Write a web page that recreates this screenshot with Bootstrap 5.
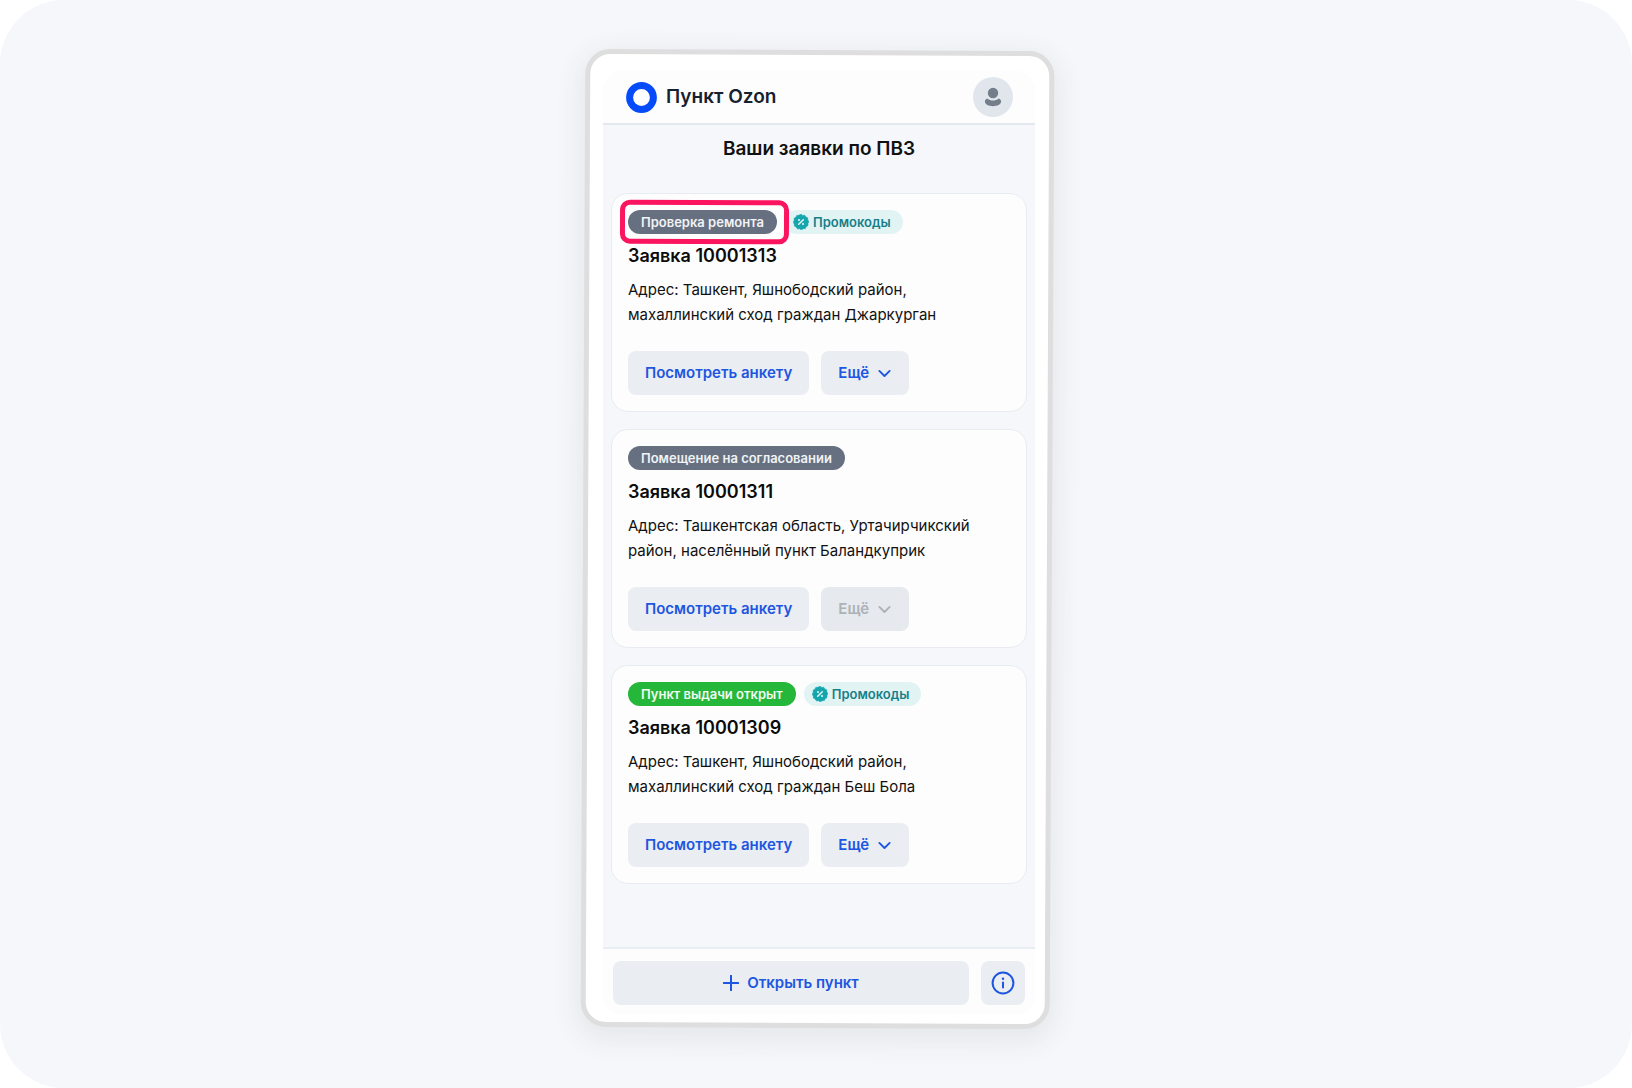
<!DOCTYPE html>
<html lang="ru">
<head>
<meta charset="utf-8">
<meta name="viewport" content="width=device-width, initial-scale=1">
<title>Пункт Ozon</title>
<link href="https://cdn.jsdelivr.net/npm/bootstrap@5.3.0/dist/css/bootstrap.min.css" rel="stylesheet">
<style>
  body { font-family: Inter, "Noto Sans", sans-serif; background: #fff; color: #111; }
  .stage { background: #f5f7fb; border-radius: 64px; padding: 71px 0 73px 6px; }
  .phone { position: relative; z-index: 0; width: 100%; max-width: 432px; }
  /* device body, slightly tilted behind the screen */
  .phone::before {
    content: ""; position: absolute; z-index: -1; inset: -21px -17px -13px -20px;
    background: #fff; border: 5px solid #dededf; border-radius: 25px;
    box-shadow: 0 8px 26px 6px rgba(60, 60, 60, .08); transform: rotate(.28deg);
  }
  .screen { background: #f5f7fb; border-radius: 20px; overflow: hidden; }
  .topbar { background: #fdfdfd; border-bottom: 2px solid #e3e8ee; padding: 6px 22px 6px 23px; }
  .brand { color: #15212e; font-size: 19px; line-height: 28px; font-weight: 600; gap: 9px; }
  .avatar { width: 40px; height: 40px; background: #e1e6ed; }
  .page-title { font-size: 19px; line-height: 28px; font-weight: 600; margin: 10px 0 30px; }
  .requests { gap: 17px; padding: 0 8px; }
  .request { background: #fdfdfd; border: 1px solid #e8ebf1; border-radius: 17px; padding: 16px; }
  .pill { font-size: 13px; line-height: 24px; font-weight: 600; border-radius: 12px; padding: 0 13px; }
  .pill-state { background: #667080; color: #f1f3f6; }
  .pill-open { background: #25b73a; color: #f1fbf2; }
  .pill-promo { background: #e2f3f3; color: #16808a; gap: 4px; padding: 0 12px 0 8px; }
  .marked { position: relative; }
  .marked::after {
    content: ""; position: absolute; inset: -10px -12px -10px -8px; z-index: 1;
    border: 5px solid #fb1460; border-radius: 10px; transform: rotate(.28deg);
  }
  .request-name { font-size: 18px; line-height: 26px; font-weight: 600; margin: 9px 0 8px; color: #0b0b0b; }
  .address { font-size: 15px; line-height: 25px; margin: 0 0 24px; }
  .action { --bs-btn-bg: #eaedf2; --bs-btn-color: #1d56e0; --bs-btn-border-width: 0px;
    --bs-btn-hover-bg: #dfe4ec; --bs-btn-hover-color: #1d56e0;
    --bs-btn-disabled-bg: #e6eaee; --bs-btn-disabled-color: #adb2b8; --bs-btn-disabled-opacity: 1;
    --bs-btn-padding-x: 17px; --bs-btn-padding-y: 0px; --bs-btn-border-radius: 8px;
    --bs-btn-font-size: 15px; --bs-btn-font-weight: 600; --bs-btn-line-height: 24px; height: 44px; }
  .bottombar { background: #fdfdfd; border-top: 2px solid #e9eef3; padding: 12px 10px 10px; gap: 12px; }
  .info { width: 44px; --bs-btn-padding-x: 0px; }
</style>
</head>
<body>
<svg class="d-none" aria-hidden="true">
  <symbol id="chevron" viewBox="0 0 16 16"><path d="M2.500 5.200 8 10.700l5.500-5.500" fill="none" stroke="currentColor" stroke-width="2" stroke-linecap="round" stroke-linejoin="round"/></symbol>
  <symbol id="promo" viewBox="0 0 16 16">
    <path d="M8 .3l1.700 1.100 2-.2 1.100 1.700 1.900.9.100 2 1.100 1.900-1 1.900.1 2-1.800 1.100-.9 1.900-2.100.1L8.300 15.700l-1.900-1-2.100.1-1.100-1.800-1.800-.9-.1-2L.2 8.300l1-1.900-.1-2.100 1.800-1.100.9-1.800 2.100-.1z" fill="#14a5ad" stroke="#14a5ad" stroke-width=".6" stroke-linejoin="round"/>
    <path d="M5.700 10.300l4.600-4.600" stroke="#e8fafa" stroke-width="1.500" stroke-linecap="round"/><circle cx="6" cy="6" r="1" fill="#e8fafa"/><circle cx="10" cy="10" r="1" fill="#e8fafa"/>
  </symbol>
</svg>
<main class="stage min-vh-100 d-flex justify-content-center">
  <div class="phone d-flex">
    <div class="screen d-flex flex-column w-100">
      <header class="topbar d-flex align-items-center justify-content-between">
        <a href="#" class="brand d-flex align-items-center text-decoration-none">
          <svg width="31" height="31" viewBox="0 0 31 31" aria-hidden="true"><circle cx="15.500" cy="15.500" r="11.900" fill="#fff" stroke="#064bfa" stroke-width="7"/></svg>
          <span>Пункт Ozon</span>
        </a>
        <button type="button" class="avatar btn border-0 rounded-circle p-0 d-flex align-items-center justify-content-center" aria-label="Профиль">
          <svg width="18" height="20" viewBox="0 0 18 20" fill="#747d8a" aria-hidden="true"><circle cx="9" cy="6" r="5.200"/><path d="M3.300 11.600C5 13 7 13.600 9 13.600s4-.6 5.700-2c1.500.5 2.400 1.500 2.400 3 0 2.900-4 4.600-8.100 4.600S.9 17.500.9 14.600c0-1.500.9-2.500 2.400-3z"/></svg>
        </button>
      </header>
      <div class="flex-grow-1">
        <h1 class="page-title text-center">Ваши заявки по ПВЗ</h1>
        <div class="requests d-flex flex-column">
          <article class="request">
            <div class="d-flex gap-2">
              <span class="pill pill-state marked">Проверка ремонта</span>
              <span class="pill pill-promo d-flex align-items-center"><svg width="16" height="16" aria-hidden="true"><use href="#promo"/></svg>Промокоды</span>
            </div>
            <h2 class="request-name">Заявка 10001313</h2>
            <p class="address">Адрес: Ташкент, Яшнободский район, махаллинский сход граждан Джаркурган</p>
            <div class="d-flex">
              <button type="button" class="btn action me-2">Посмотреть анкету</button>
              <button type="button" class="btn action d-flex align-items-center gap-2 ms-1">Ещё <svg width="15" height="15" aria-hidden="true"><use href="#chevron"/></svg></button>
            </div>
          </article>
          <article class="request">
            <div class="d-flex gap-2">
              <span class="pill pill-state">Помещение на согласовании</span>
            </div>
            <h2 class="request-name">Заявка 10001311</h2>
            <p class="address">Адрес: Ташкентская область, Уртачирчикский район, населённый пункт Баландкуприк</p>
            <div class="d-flex">
              <button type="button" class="btn action me-2">Посмотреть анкету</button>
              <button type="button" class="btn action d-flex align-items-center gap-2 ms-1" disabled>Ещё <svg width="15" height="15" aria-hidden="true"><use href="#chevron"/></svg></button>
            </div>
          </article>
          <article class="request">
            <div class="d-flex gap-2">
              <span class="pill pill-open">Пункт выдачи открыт</span>
              <span class="pill pill-promo d-flex align-items-center"><svg width="16" height="16" aria-hidden="true"><use href="#promo"/></svg>Промокоды</span>
            </div>
            <h2 class="request-name">Заявка 10001309</h2>
            <p class="address">Адрес: Ташкент, Яшнободский район, махаллинский сход граждан Беш Бола</p>
            <div class="d-flex">
              <button type="button" class="btn action me-2">Посмотреть анкету</button>
              <button type="button" class="btn action d-flex align-items-center gap-2 ms-1">Ещё <svg width="15" height="15" aria-hidden="true"><use href="#chevron"/></svg></button>
            </div>
          </article>
        </div>
      </div>
      <footer class="bottombar d-flex">
        <button type="button" class="btn action flex-grow-1 d-flex align-items-center justify-content-center gap-2">
          <svg width="16" height="16" viewBox="0 0 16 16" aria-hidden="true"><path d="M8 .8v14.400M.8 8h14.400" stroke="currentColor" stroke-width="2" stroke-linecap="round"/></svg>
          Открыть пункт
        </button>
        <button type="button" class="btn action info d-flex align-items-center justify-content-center" aria-label="Информация">
          <svg width="24" height="24" viewBox="0 0 24 24" aria-hidden="true"><circle cx="12" cy="12" r="10.400" fill="none" stroke="currentColor" stroke-width="2"/><circle cx="12" cy="7.800" r="1.200" fill="currentColor"/><path d="M12 11.500v5" stroke="currentColor" stroke-width="2" stroke-linecap="round"/></svg>
        </button>
      </footer>
    </div>
  </div>
</main>
<script src="https://cdn.jsdelivr.net/npm/bootstrap@5.3.0/dist/js/bootstrap.bundle.min.js"></script>
</body>
</html>
